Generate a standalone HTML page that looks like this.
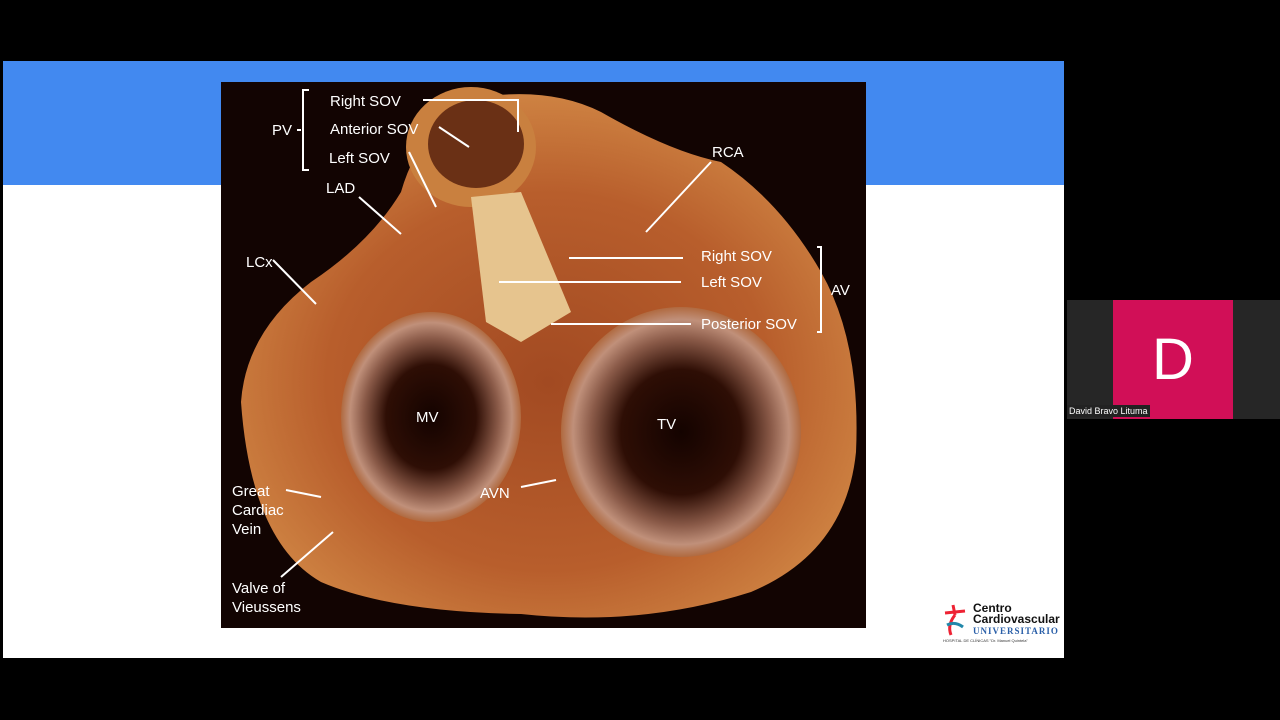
<!DOCTYPE html>
<html><head><style>
body{margin:0;width:1280px;height:720px;background:#000;position:relative;overflow:hidden;font-family:"Liberation Sans",sans-serif}
.slide{position:absolute;left:3px;top:61px;width:1061px;height:597px;background:#fff}
.band{position:absolute;left:0;top:0;width:1061px;height:124px;background:#4289f0}
.tile{position:absolute;left:1067px;top:300px;width:213px;height:119px;background:#262626}
.pink{position:absolute;left:1113px;top:300px;width:120px;height:119px;background:#d10f57;color:#fff;font-size:58px;text-align:center;line-height:119px}
.name{position:absolute;left:1067px;top:405px;background:#222;color:#fff;font-size:9px;padding:1px 2px}
</style></head><body>
<div class="slide"><div class="band"></div>
<div style="position:absolute;left:938px;top:542px;width:122px;height:45px">
<svg width="30" height="40" style="position:absolute;left:0;top:0"><path d="M12 2 L14 12 M4 10 L24 8 M14 12 Q6 22 10 32" stroke="#e23" stroke-width="3" fill="none"/><path d="M6 22 Q14 18 22 24" stroke="#28a" stroke-width="3" fill="none"/></svg>
<div style="position:absolute;left:32px;top:0;font-weight:bold;font-size:12px;line-height:11px;color:#111">Centro<br>Cardiovascular</div>
<div style="position:absolute;left:32px;top:23px;font-family:'Liberation Serif',serif;font-weight:bold;font-size:9px;color:#2a5fa8;letter-spacing:1px">UNIVERSITARIO</div>
<div style="position:absolute;left:2px;top:35px;font-size:4px;color:#333">HOSPITAL DE CLÍNICAS "Dr. Manuel Quintela"</div>
</div>
</div>
<svg style="position:absolute;left:221px;top:82px" width="645" height="546" viewBox="0 0 645 546">
<defs>
<radialGradient id="h" cx="0.5" cy="0.55" r="0.6"><stop offset="0" stop-color="#a24a22"/><stop offset="0.6" stop-color="#b85e2c"/><stop offset="1" stop-color="#d48c48"/></radialGradient>
<radialGradient id="v" cx="0.5" cy="0.5" r="0.5"><stop offset="0" stop-color="#140300"/><stop offset="0.5" stop-color="#2e0e05"/><stop offset="0.75" stop-color="#8a5a48"/><stop offset="0.9" stop-color="#c0907a"/><stop offset="1" stop-color="#b06a40"/></radialGradient>
</defs>
<rect width="645" height="546" fill="#120402"/>
<path d="M20 320 Q25 250 90 200 Q150 160 180 110 Q200 40 260 15 Q330 5 380 30 Q450 70 500 80 Q560 120 600 190 Q640 260 635 370 Q625 470 530 510 Q420 545 300 532 Q170 530 100 500 Q30 460 20 320Z" fill="url(#h)"/>
<ellipse cx="250" cy="65" rx="65" ry="60" fill="#c9803f"/>
<ellipse cx="255" cy="62" rx="48" ry="44" fill="#6a3015"/>
<ellipse cx="210" cy="335" rx="90" ry="105" fill="url(#v)"/>
<ellipse cx="460" cy="350" rx="120" ry="125" fill="url(#v)"/>
<path d="M250 115 L300 110 L350 230 L300 260 L265 240 Z" fill="#e6c48e"/>
<g stroke="#fff" stroke-width="2" fill="none">
<path d="M202 18 L297 18 L297 50 M218 45 L248 65 M188 70 L215 125 M138 115 L180 152 M52 178 L95 222 M490 80 L425 150 M348 176 L462 176 M278 200 L460 200 M330 242 L470 242 M65 408 L100 415 M112 450 L60 495 M300 405 L335 398"/>
<path d="M88 8 L82 8 L82 88 L88 88 M80 48 L76 48 M596 165 L600 165 L600 250 L596 250"/>
</g>
<g fill="#fff" font-size="15">
<text x="109" y="24">Right SOV</text><text x="109" y="52">Anterior SOV</text><text x="108" y="81">Left SOV</text>
<text x="51" y="53">PV</text><text x="105" y="111">LAD</text><text x="25" y="185">LCx</text><text x="491" y="75">RCA</text>
<text x="480" y="179">Right SOV</text><text x="480" y="205">Left SOV</text><text x="480" y="247">Posterior SOV</text><text x="610" y="213">AV</text>
<text x="195" y="340">MV</text><text x="436" y="347">TV</text><text x="259" y="416">AVN</text>
<text x="11" y="414">Great</text><text x="11" y="433">Cardiac</text><text x="11" y="452">Vein</text>
<text x="11" y="511">Valve of</text><text x="11" y="530">Vieussens</text>
</g>
</svg>
<div class="tile"></div><div class="pink">D</div><div class="name">David Bravo Lituma</div>
</body></html>
